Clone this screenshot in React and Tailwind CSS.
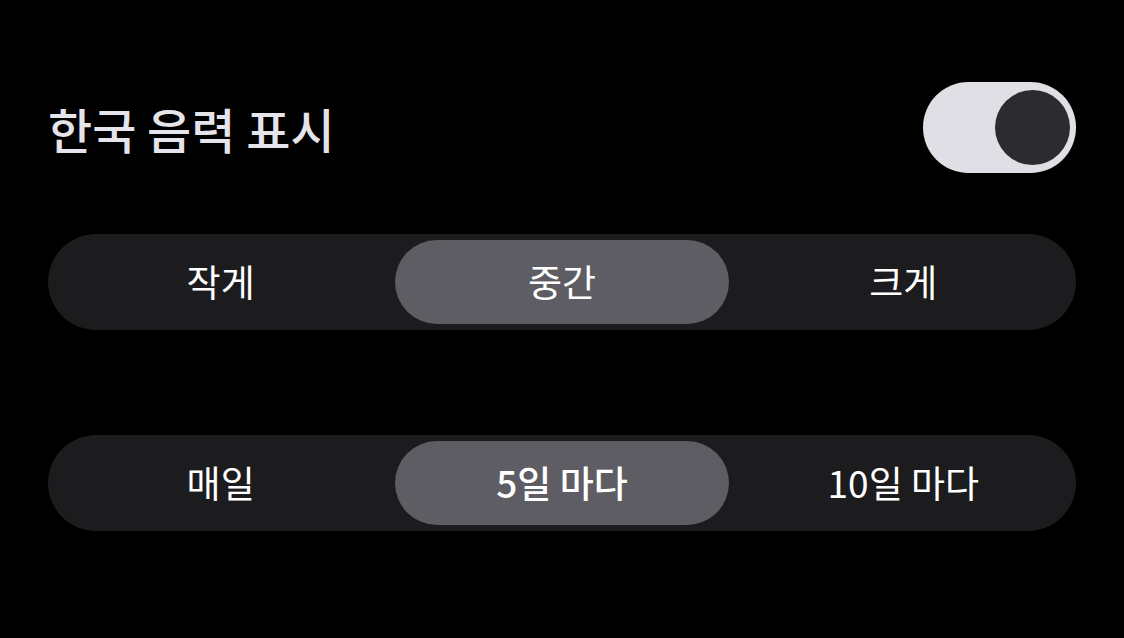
import { useState } from 'react';

const font = { fontFamily: '"Noto Sans CJK KR", "Noto Sans", sans-serif' };

function Segmented({ options, value, onChange, boldSelected }) {
  return (
    <div className="grid h-[96px] grid-cols-3 gap-2 rounded-full bg-[#1c1c1e] p-1.5">
      {options.map((opt) => {
        const active = opt === value;
        return (
          <button
            key={opt}
            onClick={() => onChange(opt)}
            className={
              'flex items-center justify-center rounded-full text-[37px] text-white ' +
              (active ? 'bg-[#5e5d63] ' : '') +
              (active && boldSelected ? 'font-medium' : 'font-normal')
            }
          >
            {opt}
          </button>
        );
      })}
    </div>
  );
}

export default function App() {
  const [on, setOn] = useState(true);
  const [size, setSize] = useState('중간');
  const [freq, setFreq] = useState('5일 마다');

  return (
    <div className="h-[638px] w-full overflow-hidden bg-black px-12 pt-[82px]" style={font}>
      <div className="flex items-center justify-between">
        <h1 className="text-[48px] font-medium text-[#e5e4ea]">한국 음력 표시</h1>
        <button
          onClick={() => setOn(!on)}
          className={
            'flex h-[91px] w-[153px] items-center rounded-full bg-[#e0dfe5] px-[6px] ' +
            (on ? 'justify-end' : 'justify-start')
          }
          aria-pressed={on}
        >
          <span className="h-[75px] w-[75px] rounded-full bg-[#2c2c2e]" />
        </button>
      </div>

      <div className="mt-[61px]">
        <Segmented options={['작게', '중간', '크게']} value={size} onChange={setSize} />
      </div>

      <div className="mt-[105px]">
        <Segmented
          options={['매일', '5일 마다', '10일 마다']}
          value={freq}
          onChange={setFreq}
          boldSelected
        />
      </div>
    </div>
  );
}
